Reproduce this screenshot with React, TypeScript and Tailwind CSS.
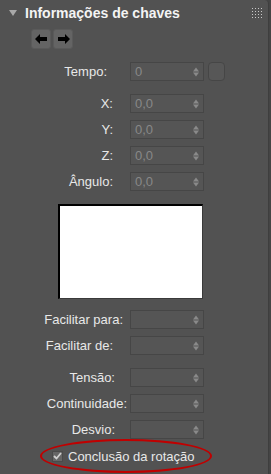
import React from "react";

const Spinner = () => (
  <div className="absolute right-[4px] top-1/2 -translate-y-1/2 flex flex-col items-center gap-[1px]">
    <div className="w-0 h-0 border-l-[3px] border-r-[3px] border-b-[4px] border-l-transparent border-r-transparent border-b-[#8a8a8a]" />
    <div className="w-0 h-0 border-l-[3px] border-r-[3px] border-t-[4px] border-l-transparent border-r-transparent border-t-[#8a8a8a]" />
  </div>
);

const Field = ({ value }: { value?: string }) => (
  <div className="relative w-[74px] h-[19px] bg-[#555555] border border-[#464646] flex items-center pl-[4px] text-[13px] text-[#888888] leading-none">
    {value}
    <Spinner />
  </div>
);

const Row = ({
  label,
  pr,
  value,
  extra,
  className,
}: {
  label: string;
  pr: string;
  value?: string;
  extra?: boolean;
  className?: string;
}) => (
  <div className={`flex items-center h-[19px] ${className ?? ""}`}>
    <div className={`w-[130px] text-right text-[13px] text-[#e8e8e8] ${pr}`}>{label}</div>
    <Field value={value} />
    {extra && (
      <div className="ml-[4px] w-[17px] h-[19px] rounded-[4px] bg-[#575757] border border-[#464646]" />
    )}
  </div>
);

const ArrowBtn = ({ dir }: { dir: "left" | "right" }) => (
  <div className="w-[20px] h-[20px] rounded-[3px] bg-[#646464] border border-[#5a5a5a] flex items-center justify-center">
    <svg width="13" height="10" viewBox="0 0 13 10">
      {dir === "left" ? (
        <path d="M0 5 L5 0 L5 3 L12 3 L12 7 L5 7 L5 10 Z" fill="#000" />
      ) : (
        <path d="M13 5 L8 0 L8 3 L1 3 L1 7 L8 7 L8 10 Z" fill="#000" />
      )}
    </svg>
  </div>
);

export default function App() {
  return (
    <div
      className="w-[271px] h-[474px] bg-[#454545] overflow-hidden"
      style={{ fontFamily: '"Liberation Sans", Arial, sans-serif' }}
    >
      <div className="w-[269px] h-[474px] bg-[#525252] border-r border-[#3e3e3e] rounded-tr-[4px] flex flex-col">
        {/* header */}
        <div className="relative h-[25px] flex items-center">
          <div className="ml-[9px] w-0 h-0 border-l-[4px] border-r-[4px] border-t-[6px] border-l-transparent border-r-transparent border-t-[#a8a8a8]" />
          <div className="ml-[8px] text-[14px] font-bold text-[#f4f4f4] leading-none">
            Informações de chaves
          </div>
          <div className="absolute left-[252px] top-[8px] grid grid-cols-4 gap-[2px]">
            {Array.from({ length: 16 }).map((_, i) => (
              <div key={i} className="w-[1px] h-[1px] bg-[#c8c8c8]" />
            ))}
          </div>
        </div>

        {/* key nav */}
        <div className="mt-[4px] ml-[31px] flex gap-[2px]">
          <ArrowBtn dir="left" />
          <ArrowBtn dir="right" />
        </div>

        <Row label="Tempo:" pr="pr-[23px]" value="0" extra className="mt-[13px]" />
        <Row label="X:" pr="pr-[17px]" value="0,0" className="mt-[13px]" />
        <Row label="Y:" pr="pr-[17px]" value="0,0" className="mt-[7px]" />
        <Row label="Z:" pr="pr-[17px]" value="0,0" className="mt-[7px]" />
        <Row label="Ângulo:" pr="pr-[17px]" value="0,0" className="mt-[7px]" />

        {/* preview */}
        <div className="mt-[13px] ml-[58px] w-[145px] h-[95px] bg-white border-t-2 border-l-2 border-t-black border-l-black border-b border-r border-b-[#3a3a3a] border-r-[#3a3a3a]" />

        <Row label="Facilitar para:" pr="pr-[7px]" className="mt-[11px]" />
        <Row label="Facilitar de:" pr="pr-[17px]" className="mt-[7px]" />
        <Row label="Tensão:" pr="pr-[15px]" className="mt-[13px]" />
        <Row label="Continuidade:" pr="pr-[3px]" className="mt-[7px]" />
        <Row label="Desvio:" pr="pr-[15px]" className="mt-[7px]" />

        {/* checkbox */}
        <div className="ml-[40px] w-[172px] h-[34px] rounded-[50%] border-2 border-[#c00000] flex items-center pl-[10px]">
          <div className="w-[11px] h-[11px] bg-[#666666] border border-[#4a4a4a] flex items-center justify-center">
            <svg width="9" height="8" viewBox="0 0 9 8">
              <path d="M1 4 L3.5 6.5 L8 1" stroke="#d0d0d0" strokeWidth="1.8" fill="none" />
            </svg>
          </div>
          <div className="ml-[5px] text-[13px] text-[#e8e8e8] leading-none">Conclusão da rotação</div>
        </div>
      </div>
    </div>
  );
}
